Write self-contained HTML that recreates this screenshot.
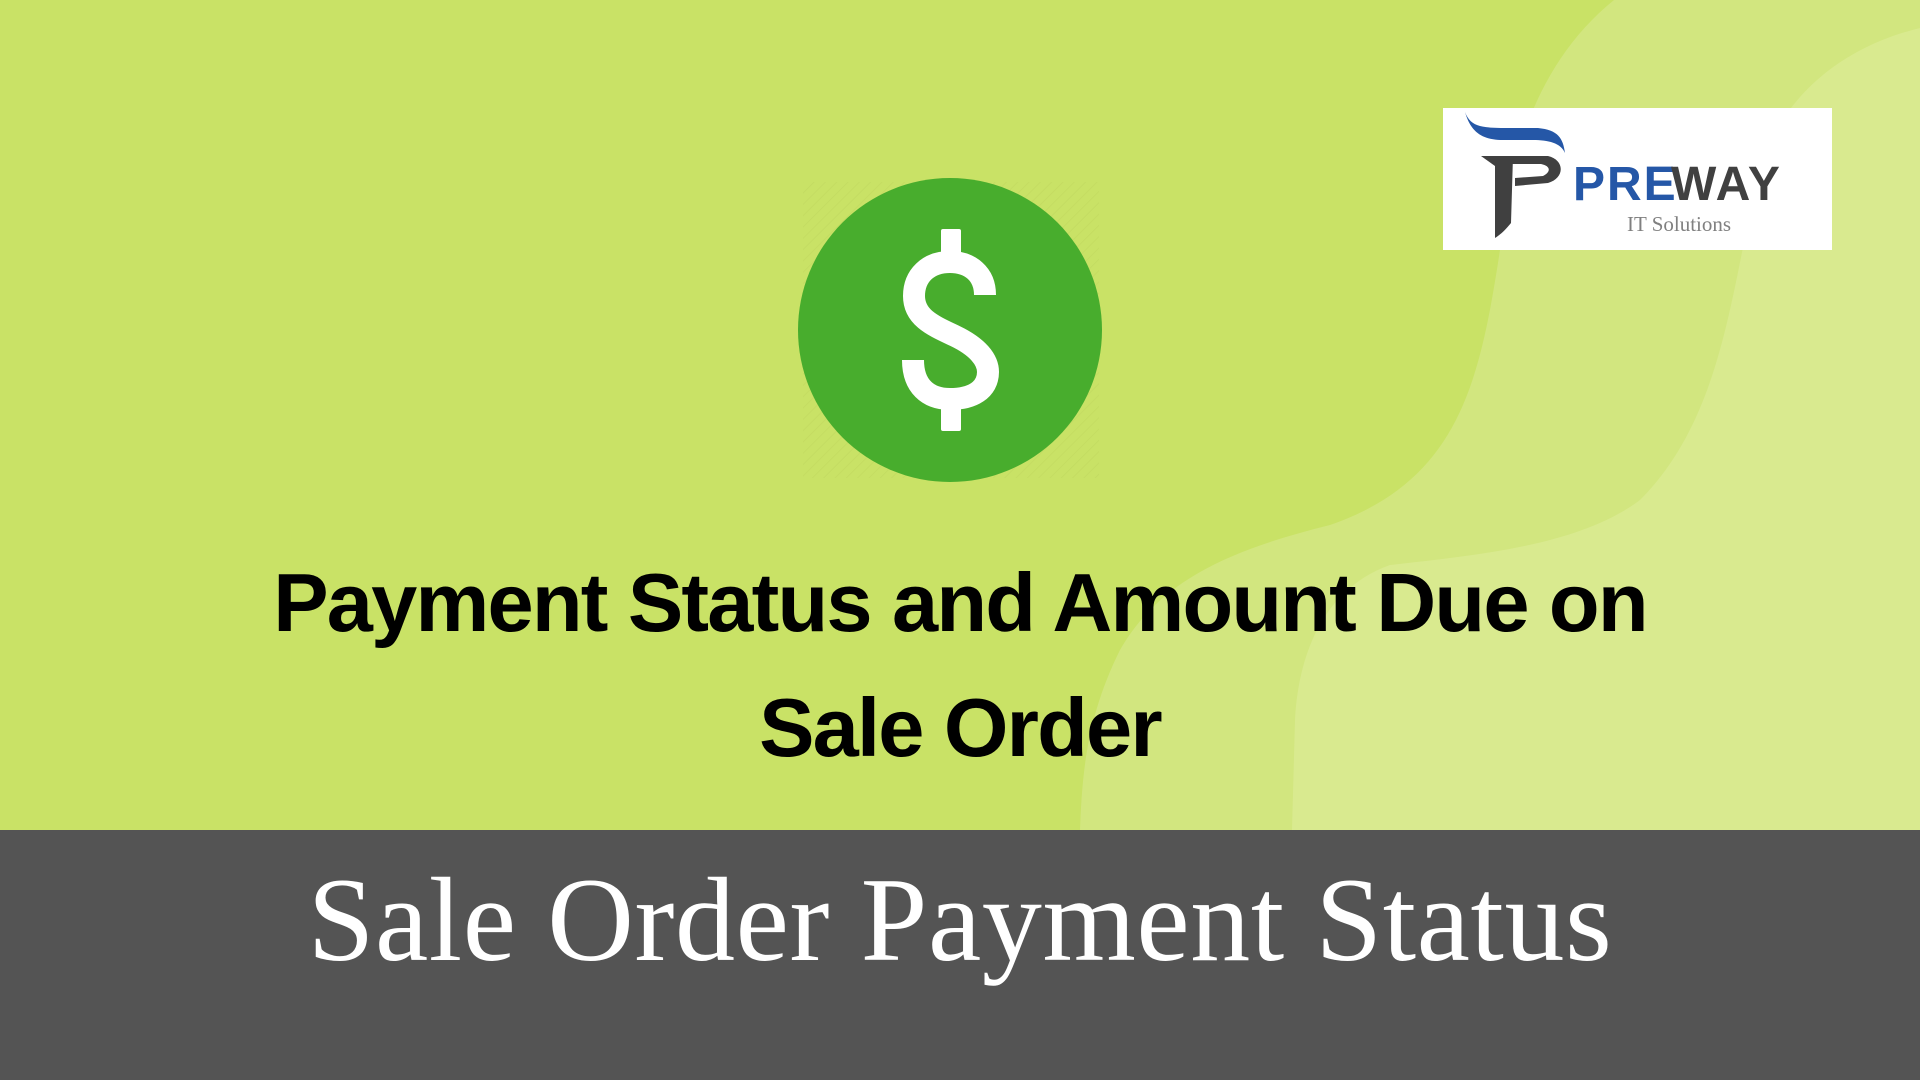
<!DOCTYPE html>
<html><head><meta charset="utf-8"><style>
*{margin:0;padding:0;box-sizing:border-box}
body{width:1920px;height:1080px;overflow:hidden;background:#c9e266;position:relative;font-family:"Liberation Sans",sans-serif}
.bg{position:absolute;left:0;top:0}
.band{position:absolute;left:0;top:830px;width:1920px;height:250px;background:#545454}
.t{position:absolute;left:0;width:1920px;text-align:center;color:#000;font-weight:bold;font-size:83px;letter-spacing:-1.8px;white-space:nowrap}
.b{position:absolute;left:0;width:1920px;text-align:center;color:#fff;font-family:"Liberation Serif",serif;font-size:120px;letter-spacing:0.6px;top:855px;line-height:130px;white-space:nowrap}
.logo{position:absolute;left:1443px;top:108px;width:389px;height:142px;background:#fff}
</style></head><body>
<svg class="bg" width="1920" height="830" viewBox="0 0 1920 830">
<path d="M1614 0 C1540 60 1510 150 1500 250 C1480 380 1460 480 1330 525 C1230 550 1160 580 1120 650 C1085 720 1082 780 1080 830 L1920 830 L1920 0 Z" fill="#d2e67f"/>
<path d="M1920 28 C1830 50 1770 110 1755 190 C1730 300 1720 420 1640 500 C1580 545 1480 555 1390 565 C1320 590 1298 660 1295 720 L1292 830 L1920 830 Z" fill="#d9ea8f"/>
<defs><pattern id="h" width="8" height="8" patternUnits="userSpaceOnUse" patternTransform="rotate(45)"><line x1="0" y1="0" x2="0" y2="8" stroke="#bfd65d" stroke-width="1.5"/></pattern></defs>
<rect x="803" y="182" width="296" height="296" fill="url(#h)" opacity="0.6"/>
<circle cx="950" cy="330" r="152" fill="#48ad2d"/>
<rect x="941" y="229" width="20" height="30" rx="2" fill="#fff"/>
<rect x="941" y="398" width="20" height="33" rx="2" fill="#fff"/>
<path d="M985 295 C985 274 970 262 950 262 C928 262 914 276 914 296 C914 318 934 326 955 336 C978 347 988 360 988 372 C988 390 972 399 950 399 C928 399 913 386 913 360" fill="none" stroke="#fff" stroke-width="22"/>
</svg>
<div class="logo">
<svg width="389" height="142" viewBox="0 0 389 142">
<path d="M22 4 C28 20 40 20 70 20 L95 20 C115 22 120 30 122 45 C118 35 105 32 90 32 L60 32 C40 32 28 25 22 4Z" fill="#2557a7"/>
<path d="M38 48 L70 48 L68 115 C60 125 55 128 52 130 L52 58 Z" fill="#404040"/>
<path d="M66 48 L105 48 C122 52 122 70 105 75 L72 78 L72 70 L100 68 C108 64 108 58 98 56 L66 56 Z" fill="#404040"/>
<text x="130" y="92" font-family="Liberation Sans,sans-serif" font-weight="bold" font-size="48" letter-spacing="2" fill="#2557a7">PRE</text>
<text x="228" y="92" font-family="Liberation Sans,sans-serif" font-weight="bold" font-size="48" letter-spacing="2" fill="#404040">WAY</text>
<text x="184" y="123" font-family="Liberation Serif,serif" font-size="21" fill="#808080">IT Solutions</text>
</svg>
</div>
<div class="t" style="top:553px;line-height:100px">Payment Status and Amount Due on</div>
<div class="t" style="top:678px;line-height:100px">Sale Order</div>
<div class="band"></div>
<div class="b">Sale Order Payment Status</div>
</body></html>
